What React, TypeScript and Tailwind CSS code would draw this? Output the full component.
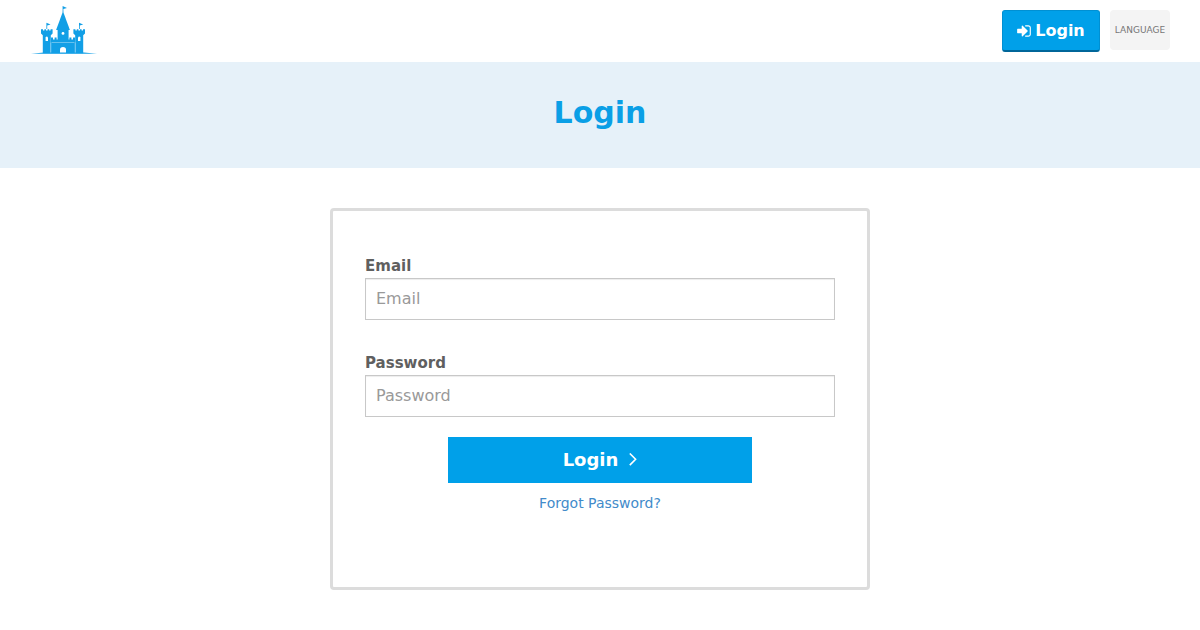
import React from "react";

function CastleLogo() {
  return (
    <svg viewBox="30 4 68 52" className="h-[52px] w-[68px]" fill="#129fe6" aria-hidden="true">
      <path d="M31 53.8 L44 52.4 H84 L97 53.8 Z" />
      <path d="M62.6 12.5 V6 L67 8 L63.4 9 V12.5 Z" />
      <path d="M46.4 29 V22.8 L50.6 24.6 L47.2 25.6 V29 Z" />
      <path d="M79 29 V22.8 L83.2 24.6 L79.8 25.6 V29 Z" />
      <path d="M63 11.5 L64 14 L69.9 30 H56.1 L62 14 Z" />
      <path d="M57.6 30 H68.6 V41 H57.6 Z" />
      <path d="M41 29.2 H43 V30.6 H44.4 V29.2 H46 V30.6 H47.6 V29.2 H49.2 V30.6 H50.6 V29.2 H52.6 V33.4 L50.8 35.2 V53.3 H42.8 V35.2 L41 33.4 Z" />
      <path d="M73.4 29.2 H75.4 V30.6 H76.8 V29.2 H78.4 V30.6 H80 V29.2 H81.6 V30.6 H83 V29.2 H85 V33.4 L83.2 35.2 V53.3 H75.2 V35.2 L73.4 33.4 Z" />
      <path d="M51 37.6 H53 V39.6 H54.6 V37.6 H56.6 V39.6 H58.2 V37.6 H60.2 V39.6 H61.8 V37.6 H64.2 V39.6 H65.8 V37.6 H67.8 V39.6 H69.4 V37.6 H71.4 V39.6 H73 V37.6 H75 V53.3 H51 Z" />
      <g fill="#fff">
        <path d="M45.6 41 V37.6 Q46.8 35.6 48 37.6 V41 Z" />
        <path d="M78 41 V37.6 Q79.2 35.6 80.4 37.6 V41 Z" />
        <circle cx="63" cy="33.4" r="1.4" />
        <path d="M60 52.4 V49.5 Q60 47 63 47 Q66 47 66 49.5 V52.4 Z" />
        <path d="M51.6 42.4 H74.4 V43 H51.6 Z" opacity="0.6" />
        <path d="M50.6 42.6 H51.2 V52.6 H50.6 Z M74.8 42.6 H75.4 V52.6 H74.8 Z" opacity="0.6" />
      </g>
    </svg>
  );
}

function SignInIcon() {
  return (
    <svg viewBox="0 0 1792 1792" className="size-4" fill="currentColor" aria-hidden="true">
      <path d="M1312 896q0 26-19 45l-544 544q-19 19-45 19t-45-19-19-45v-288h-448q-26 0-45-19t-19-45v-384q0-26 19-45t45-19h448v-288q0-26 19-45t45-19 45 19l544 544q19 19 19 45zm352-352v704q0 119-84.5 203.5t-203.5 84.5h-320q-13 0-22.5-9.5t-9.5-22.5q0-4-1-20t-.5-26.5 3-23.5 10-19.5 20.5-6.5h320q66 0 113-47t47-113v-704q0-66-47-113t-113-47h-312l-11.5-1-11.5-3-8-5.5-7-9-2-13.5q0-4-1-20t-.5-26.5 3-23.5 10-19.5 20.5-6.5h320q119 0 203.5 84.5t84.5 203.5z" />
    </svg>
  );
}

function Field({ id, label, type }: { id: string; label: string; type: string }) {
  return (
    <div>
      <label htmlFor={id} className="block text-[15px] leading-6 font-bold text-[#5f5f5f]">
        {label}
      </label>
      <input
        id={id}
        type={type}
        placeholder={label}
        className="block h-[42px] w-full border border-[#c8c8c8] bg-white px-2.5 pb-0.5 text-base text-[#555] shadow-[inset_0_1px_1px_rgba(0,0,0,0.075)] outline-none placeholder:text-[#999]"
      />
    </div>
  );
}

export default function App() {
  return (
    <div className="bg-white font-['DejaVu_Sans',sans-serif]">
      <header className="flex items-start justify-between px-[30px] pt-1 pb-1.5">
        <a href="#home" aria-label="Home">
          <CastleLogo />
        </a>
        <div className="flex gap-2.5 pt-1.5">
          <a
            href="#login"
            className="flex h-[42px] w-[98px] items-center justify-center gap-[3px] rounded-[3px] border border-b-2 border-[#0090d3] border-b-[#006699] bg-[#00a0e9] pr-px text-base font-bold text-white"
          >
            <SignInIcon />
            Login
          </a>
          <button type="button" className="h-10 w-[60px] rounded-[4px] bg-[#f4f4f4] pt-0.5 text-[9px] text-[#777]">
            LANGUAGE
          </button>
        </div>
      </header>
      <div className="bg-[#e6f1f9] pt-[30px] pb-[34px] text-center">
        <h1 className="text-[30px] leading-[42px] font-bold text-[#0a9fe6]">Login</h1>
      </div>
      <main className="px-4 py-10">
        <form
          className="mx-auto flex max-w-[540px] flex-col rounded-[4px] border-3 border-[#dcdcdc] px-8 pt-[43px] pb-[74px]"
          onSubmit={(e) => e.preventDefault()}
        >
          <div className="flex flex-col gap-[31px]">
            <Field id="email" label="Email" type="email" />
            <Field id="password" label="Password" type="password" />
          </div>
          <button
            type="submit"
            className="mx-auto mt-5 flex h-[46px] w-[304px] items-center justify-center gap-2.5 bg-[#00a0e9] text-lg font-bold text-white"
          >
            Login
            <svg viewBox="0 0 9 14" className="h-3.5 w-[9px]" fill="none" stroke="currentColor" strokeWidth="1.6" aria-hidden="true">
              <path d="M1.8 0.5 L7.6 6.3 L1.8 12.1" />
            </svg>
          </button>
          <a href="#forgot" className="mt-2.5 self-center text-sm text-[#428bca]">
            Forgot Password?
          </a>
        </form>
      </main>
    </div>
  );
}
